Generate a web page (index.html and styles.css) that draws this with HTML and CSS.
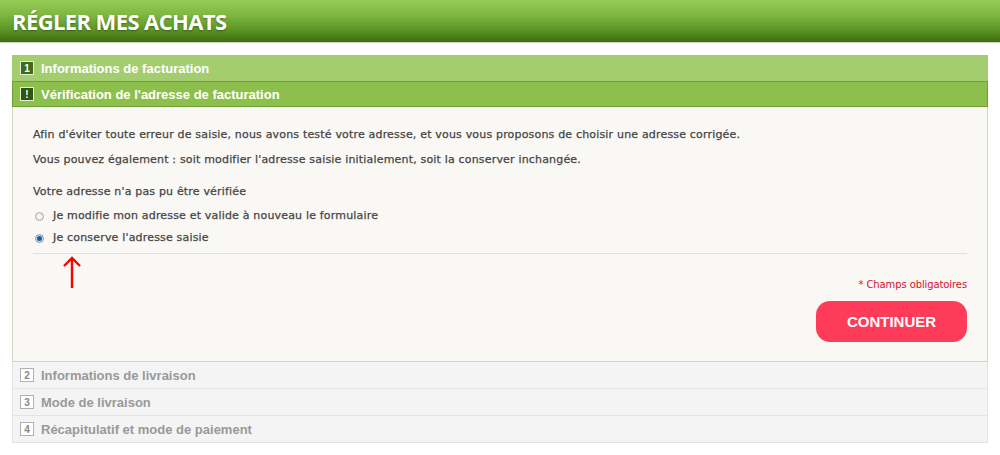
FILE: index.html
```html
<!DOCTYPE html>
<html lang="fr">
<head>
<meta charset="utf-8">
<title>Régler mes achats</title>
<link rel="stylesheet" href="styles.css">
</head>
<body>
<header class="page-header"><h1>RÉGLER MES ACHATS</h1></header>
<main class="steps">
  <div class="step step-done"><span class="badge">1</span>Informations de facturation</div>
  <div class="step step-active"><span class="badge">!</span>Vérification de l'adresse de facturation</div>
  <section class="panel">
    <p class="intro">Afin d'éviter toute erreur de saisie, nous avons testé votre adresse, et vous vous proposons de choisir une adresse corrigée.</p>
    <p class="intro">Vous pouvez également : soit modifier l'adresse saisie initialement, soit la conserver inchangée.</p>
    <p class="question">Votre adresse n'a pas pu être vérifiée</p>
    <label class="choice"><span class="radio"></span>Je modifie mon adresse et valide à nouveau le formulaire</label>
    <label class="choice"><span class="radio checked"></span>Je conserve l'adresse saisie</label>
    <div class="sep"></div>
    <div class="below">
      <svg class="arrow" width="20" height="34" viewBox="0 0 20 34"><path d="M10 33 V3 M2 11 L10 3 L18 11" fill="none" stroke="#f00" stroke-width="2.4"/></svg>
      <div class="actions">
        <p class="required">* Champs obligatoires</p>
        <button class="btn">CONTINUER</button>
      </div>
    </div>
  </section>
  <div class="step step-todo"><span class="badge">2</span>Informations de livraison</div>
  <div class="step step-todo"><span class="badge">3</span>Mode de livraison</div>
  <div class="step step-todo"><span class="badge">4</span>Récapitulatif et mode de paiement</div>
</main>
</body>
</html>
```
FILE: styles.css
```css
* { box-sizing: border-box; }
body { margin: 0; background: #fff; font-family: "DejaVu Sans", Verdana, sans-serif; }
.page-header {
  height: 43px;
  background: linear-gradient(#96cb56 0%, #7fb742 35%, #5d9626 70%, #3e6e0f 100%);
  border-bottom: 1px solid #c9d6b8;
  padding: 0 12px;
  display: flex; align-items: center;
}
.page-header h1 {
  margin: 0 0 1px; color: #fff; font-family: "Open Sans", sans-serif; font-weight: 700;
  font-size: 22px; letter-spacing: -0.6px;
  text-shadow: 0 1px 2px rgba(0,0,0,0.35);
}
.steps { margin: 12px 12px 0; }
.step {
  height: 27px; display: flex; align-items: center;
  padding-left: 7px;
  font-family: "Liberation Sans", Arial, sans-serif; font-weight: 700; font-size: 13px;
}
.badge {
  width: 14px; height: 14px; display: inline-flex; align-items: center; justify-content: center;
  font-size: 10px; font-weight: 700; margin-right: 7px;
}
.step-done { background: #a3cd6e; color: #fff; border: 1px solid #a3cd6e; height: 26px; }
.step-done .badge { background: #3f6a1a; color: #fff; border: 1px solid #e2efd3; }
.step-active { background: #8cbf4b; color: #fff; border: 1px solid #6e9f36; height: 26px; }
.step-active .badge { background: #2f5510; color: #fff; border: 1px solid #e2efd3; }
.step-todo { background: #f4f4f4; color: #999; border: 1px solid #e3e3e3; border-top: 0; }
.step-todo .badge { background: #fff; color: #888; border: 1px solid #b0b0b0; }
.panel {
  background: #f9f8f4; border: 1px solid #d7d2c3; border-top: 0;
  padding: 21px 20px 19px 20px;
}
.panel p { margin: 0; }
.intro, .question, .choice {
  font-size: 11px; color: #454545; line-height: 14px; letter-spacing: 0.18px;
  -webkit-text-stroke: 0.25px #454545;
}
.intro { margin-bottom: 11px !important; }
.question { margin-top: 18px !important; margin-bottom: 10px !important; }
.choice { display: flex; align-items: center; margin-bottom: 8px; padding-left: 2px; }
.radio {
  width: 9px; height: 9px; border-radius: 50%; margin-right: 9px;
  background: radial-gradient(#fff, #ddd); border: 1px solid #aaa;
}
.radio.checked { background: radial-gradient(#1b5f9a 0 2px, #cfd8e0 3px); border-color: #8a98a6; }
.sep { height: 1px; background: #e4e1d8; margin-top: 6px; }
.below { display: flex; justify-content: space-between; align-items: flex-start; }
.arrow { margin-left: 29px; margin-top: 1px; }
.actions { display: flex; flex-direction: column; align-items: flex-end; padding-top: 25px; }
.required { color: #d8102f; font-size: 10px; line-height: 12px; letter-spacing: -0.1px; }
.btn {
  margin-top: 10px; width: 151px; height: 41px; border: 0; border-radius: 14px;
  background: #ff3b5a; color: #fff; font-family: "Liberation Sans", Arial, sans-serif;
  font-weight: 700; font-size: 15px;
}
```
